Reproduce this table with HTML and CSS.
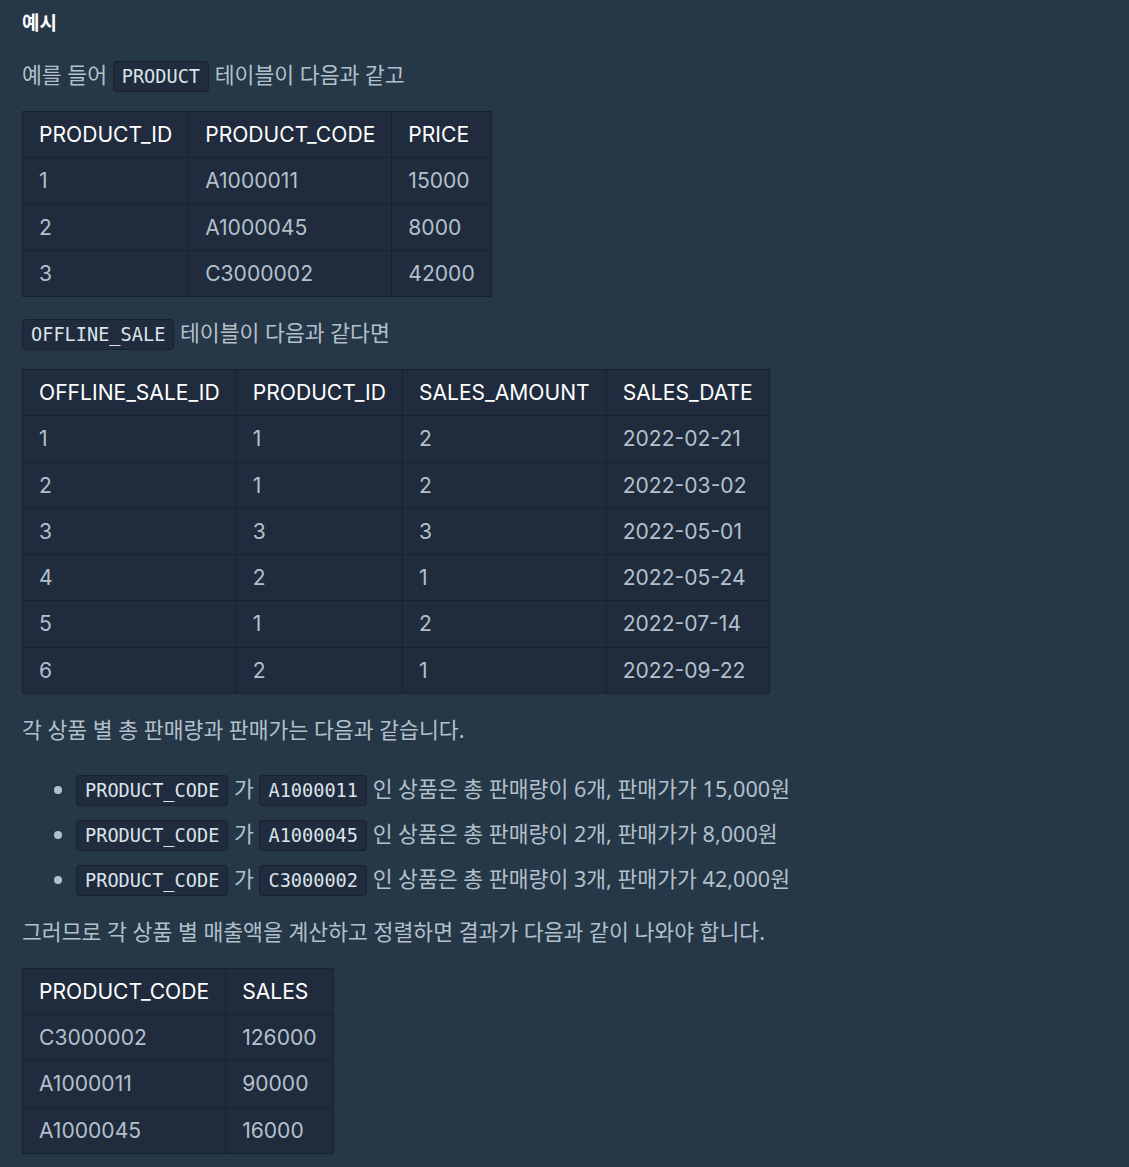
FILE: index.html
```html
<!DOCTYPE html>
<html lang="ko">
<head>
<meta charset="UTF-8">
<meta name="viewport" content="width=device-width, initial-scale=1.0">
<title>예시</title>
<link rel="stylesheet" href="styles.css">
</head>
<body>

<div class="guide">
  <h5>예시</h5>

  <p>예를 들어 <code>PRODUCT</code> 테이블이 다음과 같고</p>

  <table>
    <thead>
      <tr><th>PRODUCT_ID</th><th>PRODUCT_CODE</th><th>PRICE</th></tr>
    </thead>
    <tbody>
      <tr><td>1</td><td>A1000011</td><td>15000</td></tr>
      <tr><td>2</td><td>A1000045</td><td>8000</td></tr>
      <tr><td>3</td><td>C3000002</td><td>42000</td></tr>
    </tbody>
  </table>

  <p><code>OFFLINE_SALE</code> 테이블이 다음과 같다면</p>

  <table>
    <thead>
      <tr><th>OFFLINE_SALE_ID</th><th>PRODUCT_ID</th><th>SALES_AMOUNT</th><th>SALES_DATE</th></tr>
    </thead>
    <tbody>
      <tr><td>1</td><td>1</td><td>2</td><td>2022-02-21</td></tr>
      <tr><td>2</td><td>1</td><td>2</td><td>2022-03-02</td></tr>
      <tr><td>3</td><td>3</td><td>3</td><td>2022-05-01</td></tr>
      <tr><td>4</td><td>2</td><td>1</td><td>2022-05-24</td></tr>
      <tr><td>5</td><td>1</td><td>2</td><td>2022-07-14</td></tr>
      <tr><td>6</td><td>2</td><td>1</td><td>2022-09-22</td></tr>
    </tbody>
  </table>

  <p>각 상품 별 총 판매량과 판매가는 다음과 같습니다.</p>

  <ul>
    <li><code>PRODUCT_CODE</code> 가 <code>A1000011</code> 인 상품은 총 판매량이 6개, 판매가가 15,000원</li>
    <li><code>PRODUCT_CODE</code> 가 <code>A1000045</code> 인 상품은 총 판매량이 2개, 판매가가 8,000원</li>
    <li><code>PRODUCT_CODE</code> 가 <code>C3000002</code> 인 상품은 총 판매량이 3개, 판매가가 42,000원</li>
  </ul>

  <p>그러므로 각 상품 별 매출액을 계산하고 정렬하면 결과가 다음과 같이 나와야 합니다.</p>

  <table>
    <thead>
      <tr><th>PRODUCT_CODE</th><th>SALES</th></tr>
    </thead>
    <tbody>
      <tr><td>C3000002</td><td>126000</td></tr>
      <tr><td>A1000011</td><td>90000</td></tr>
      <tr><td>A1000045</td><td>16000</td></tr>
    </tbody>
  </table>
</div>

</body>
</html>
```

FILE: styles.css
```css
body {
  margin: 0;
  background-color: #263747;
  color: #b2c0cc;
  font-family: "Noto Sans", "Noto Sans CJK KR", sans-serif;
}
.guide {
  padding: 10px 22px 14px;
}
h5 {
  margin: 0 0 22px;
  font-size: 19px;
  line-height: 27px;
  font-weight: 700;
  color: #ffffff;
}
p {
  margin: 0 0 20px;
  font-size: 21.6px;
  line-height: 32px;
}
code {
  font-family: "DejaVu Sans Mono", monospace;
  font-size: 18.6px;
  line-height: 1;
  color: #dbe3ea;
  background-color: #202b3d;
  border: 1px solid #172130;
  border-radius: 4px;
  padding: 4px 8px;
}
table {
  border-collapse: collapse;
  background-color: #202b3d;
  margin: 0 0 20px;
  font-family: Inter, "Noto Sans", sans-serif;
  font-size: 21.1px;
  line-height: 31.25px;
}
th, td {
  border: 1px solid #172130;
  padding: 7px 16px;
  text-align: left;
  white-space: nowrap;
}
th {
  font-weight: 400;
  color: #ffffff;
}
ul {
  margin: 27px 0 21px;
  padding-left: 54px;
  font-size: 21.6px;
  line-height: 32px;
}
li + li {
  margin-top: 13px;
}
li::marker {
  color: #b2c0cc;
}
```
